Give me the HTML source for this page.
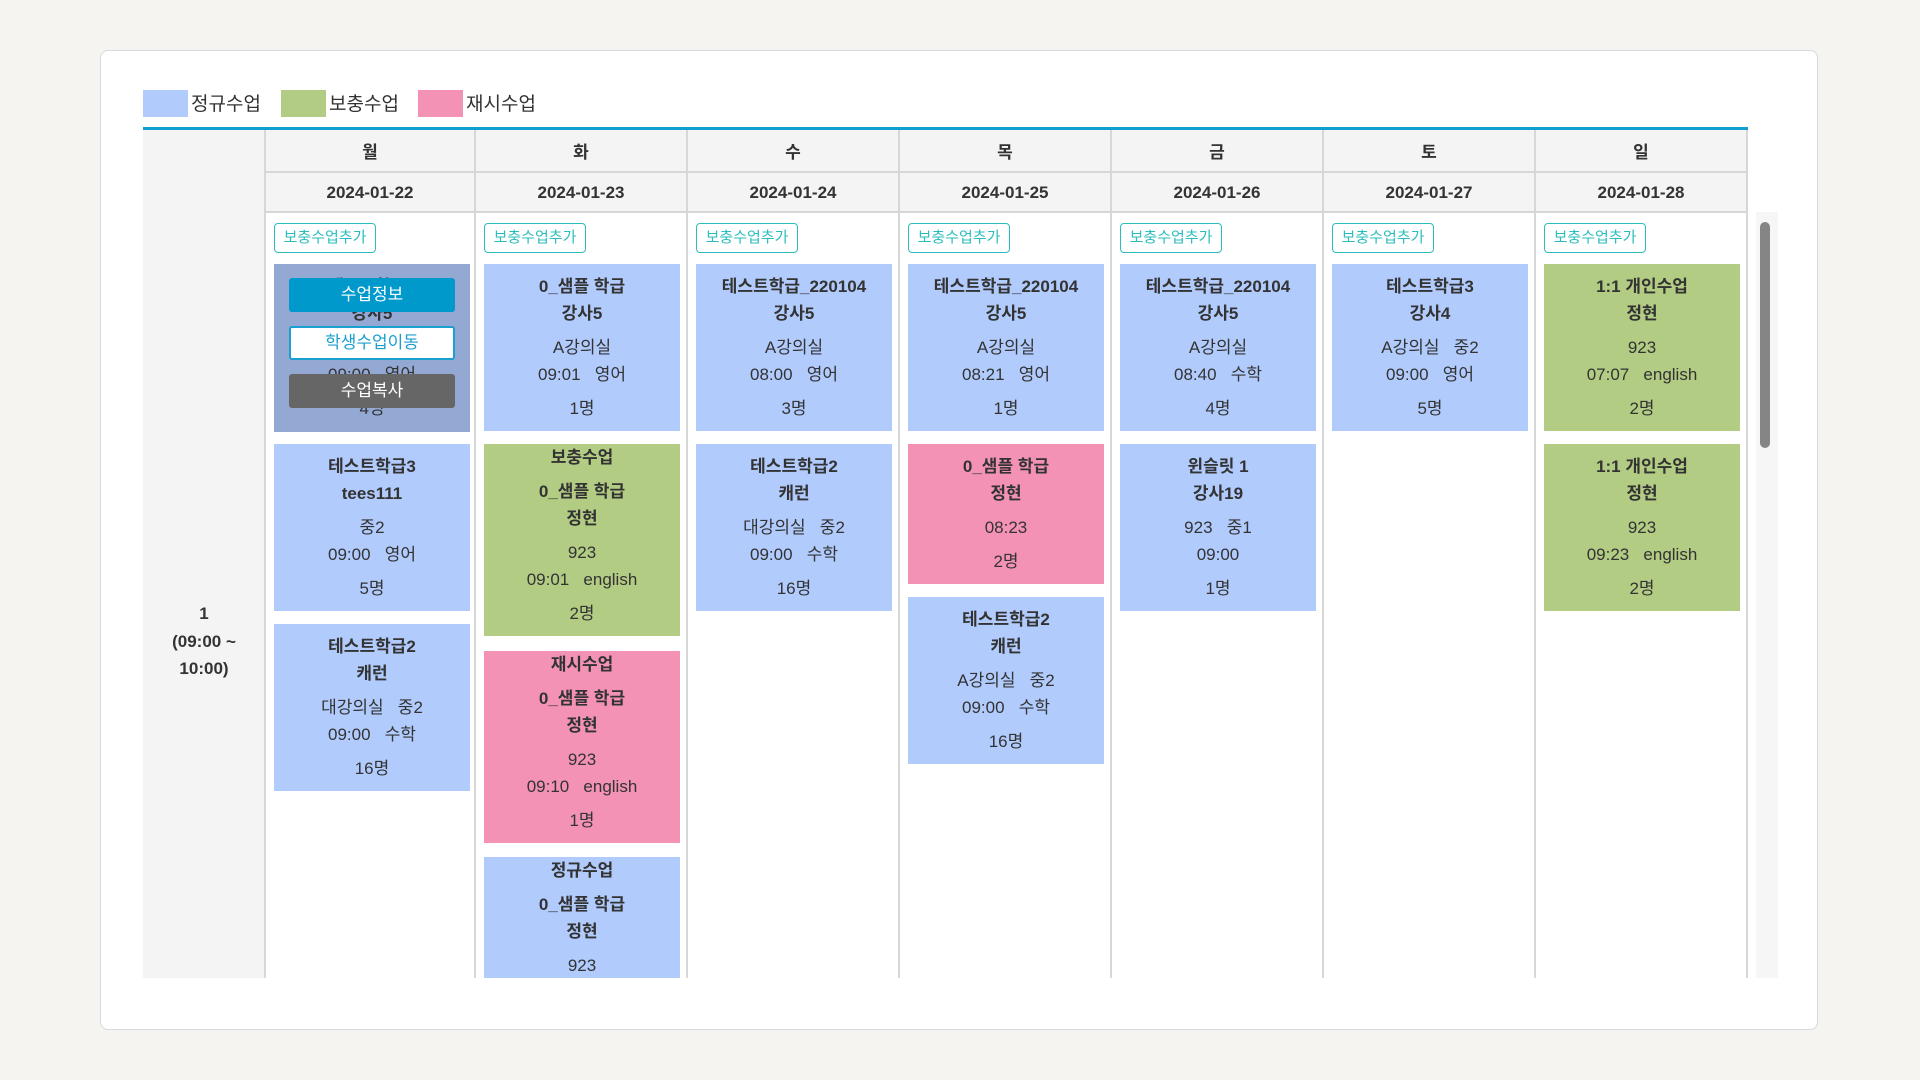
<!DOCTYPE html>
<html><head><meta charset="utf-8"><style>
*{box-sizing:border-box;margin:0;padding:0}
body{width:1920px;height:1080px;background:#f5f4f1;font-family:"Liberation Sans","Noto Sans CJK KR",sans-serif;color:#333;position:relative;overflow:hidden}
.panel{position:absolute;left:100px;top:50px;width:1718px;height:980px;background:#fff;border:1px solid #d5d8de;border-radius:8px}
.sw{position:absolute;top:90px;width:45px;height:27px}
.lg{position:absolute;top:91px;font-size:19px;line-height:27px;color:#333}
.bl{position:absolute;left:143px;top:127px;width:1605px;height:3px;background:#119fcf}
.timecol{position:absolute;left:143px;top:130px;width:122px;height:848px;background:#f4f4f4;border-right:1px solid #d7d7d7}
.hd{position:absolute;background:#f4f4f4;border-right:2px solid #d7d7d7;border-bottom:2px solid #d7d7d7;text-align:center;font-weight:bold;font-size:17px;color:#333}
.col{position:absolute;top:212px;height:766px;border-right:2px solid #d7d7d7}
.add{position:absolute;left:8px;top:11px;width:102px;height:30px;border:1.5px solid #2bbdbd;border-radius:4px;color:#2bbdbd;font-size:15px;line-height:27px;text-align:center;background:#fff}
.c{position:absolute;left:8px;width:196px;text-align:center;font-size:17px;line-height:27px;padding:9px 0}
.c.h{padding-top:0}
.c b{display:block}
.c .g{margin-top:7px}
.blue{background:#b1cbfd}.green{background:#b3cc84}.pink{background:#f492b5}
.time{position:absolute;left:143px;top:600px;width:122px;text-align:center;font-weight:bold;font-size:17px;line-height:27.5px}
.ov{position:absolute;left:8px;width:196px;background:#93a8d3}
.ov b{display:block}
.btn{position:absolute;left:15px;width:166px;height:34px;border-radius:3px;font-size:17px;line-height:34px;text-align:center}
.sb{position:absolute;left:1756px;top:212px;width:22px;height:766px;background:#f6f6f6}
.sb div{position:absolute;left:4px;top:10px;width:10px;height:226px;background:#858585;border-radius:5px}
</style></head><body>
<div class="panel"></div>
<div class="sw" style="left:143px;background:#b1cbfd"></div><div class="lg" style="left:191px">정규수업</div>
<div class="sw" style="left:281px;background:#b3cc84"></div><div class="lg" style="left:329px">보충수업</div>
<div class="sw" style="left:418px;background:#f492b5"></div><div class="lg" style="left:466px">재시수업</div>
<div class="bl"></div>
<div class="timecol"></div>
<div class="time">1<br>(09:00 ~<br>10:00)</div>

<div class="hd" style="left:264px;top:130px;width:212px;height:43px;line-height:46px;border-left:2px solid #d7d7d7">월</div>
<div class="hd" style="left:476px;top:130px;width:212px;height:43px;line-height:46px">화</div>
<div class="hd" style="left:688px;top:130px;width:212px;height:43px;line-height:46px">수</div>
<div class="hd" style="left:900px;top:130px;width:212px;height:43px;line-height:46px">목</div>
<div class="hd" style="left:1112px;top:130px;width:212px;height:43px;line-height:46px">금</div>
<div class="hd" style="left:1324px;top:130px;width:212px;height:43px;line-height:46px">토</div>
<div class="hd" style="left:1536px;top:130px;width:212px;height:43px;line-height:46px">일</div>
<div class="hd" style="left:264px;top:173px;width:212px;height:40px;line-height:40px;border-left:2px solid #d7d7d7">2024-01-22</div>
<div class="hd" style="left:476px;top:173px;width:212px;height:40px;line-height:40px">2024-01-23</div>
<div class="hd" style="left:688px;top:173px;width:212px;height:40px;line-height:40px">2024-01-24</div>
<div class="hd" style="left:900px;top:173px;width:212px;height:40px;line-height:40px">2024-01-25</div>
<div class="hd" style="left:1112px;top:173px;width:212px;height:40px;line-height:40px">2024-01-26</div>
<div class="hd" style="left:1324px;top:173px;width:212px;height:40px;line-height:40px">2024-01-27</div>
<div class="hd" style="left:1536px;top:173px;width:212px;height:40px;line-height:40px">2024-01-28</div>

<!-- Mon -->
<div class="col" style="left:264px;width:212px;border-left:2px solid #d7d7d7">
<div class="add">보충수업추가</div>
<div class="ov" style="top:52px;height:168px;color:#333;text-align:center;font-size:17px;line-height:27px;padding-top:9px"><b>테스트학급3</b><b>강사5</b><div style="margin-top:7px">A강의실</div><div>09:00&nbsp;&nbsp;&nbsp;영어</div><div style="margin-top:7px">4명</div>
<div class="btn" style="top:14px;background:#0099cc;color:#fff">수업정보</div>
<div class="btn" style="top:62px;background:#fff;color:#1a9fcf;border:2px solid #1aa0d0;line-height:30px">학생수업이동</div>
<div class="btn" style="top:110px;background:#666;color:#fff">수업복사</div>
</div>
<div class="c blue" style="top:232px"><b>테스트학급3</b><b>tees111</b><div class="g">중2</div><div>09:00&nbsp;&nbsp;&nbsp;영어</div><div class="g">5명</div></div>
<div class="c blue" style="top:412px"><b>테스트학급2</b><b>캐런</b><div class="g">대강의실&nbsp;&nbsp;&nbsp;중2</div><div>09:00&nbsp;&nbsp;&nbsp;수학</div><div class="g">16명</div></div>
</div>

<!-- Tue -->
<div class="col" style="left:476px;width:212px;overflow:hidden">
<div class="add">보충수업추가</div>
<div class="c blue" style="top:52px"><b>0_샘플 학급</b><b>강사5</b><div class="g">A강의실</div><div>09:01&nbsp;&nbsp;&nbsp;영어</div><div class="g">1명</div></div>
<div class="c green h" style="top:232px"><b>보충수업</b><b class="g">0_샘플 학급</b><b>정현</b><div class="g">923</div><div>09:01&nbsp;&nbsp;&nbsp;english</div><div class="g">2명</div></div>
<div class="c pink h" style="top:439px"><b>재시수업</b><b class="g">0_샘플 학급</b><b>정현</b><div class="g">923</div><div>09:10&nbsp;&nbsp;&nbsp;english</div><div class="g">1명</div></div>
<div class="c blue h" style="top:645px"><b>정규수업</b><b class="g">0_샘플 학급</b><b>정현</b><div class="g">923</div><div>09:10&nbsp;&nbsp;&nbsp;english</div><div class="g">1명</div></div>
</div>

<!-- Wed -->
<div class="col" style="left:688px;width:212px">
<div class="add">보충수업추가</div>
<div class="c blue" style="top:52px"><b>테스트학급_220104</b><b>강사5</b><div class="g">A강의실</div><div>08:00&nbsp;&nbsp;&nbsp;영어</div><div class="g">3명</div></div>
<div class="c blue" style="top:232px"><b>테스트학급2</b><b>캐런</b><div class="g">대강의실&nbsp;&nbsp;&nbsp;중2</div><div>09:00&nbsp;&nbsp;&nbsp;수학</div><div class="g">16명</div></div>
</div>

<!-- Thu -->
<div class="col" style="left:900px;width:212px">
<div class="add">보충수업추가</div>
<div class="c blue" style="top:52px"><b>테스트학급_220104</b><b>강사5</b><div class="g">A강의실</div><div>08:21&nbsp;&nbsp;&nbsp;영어</div><div class="g">1명</div></div>
<div class="c pink" style="top:232px"><b>0_샘플 학급</b><b>정현</b><div class="g">08:23</div><div class="g">2명</div></div>
<div class="c blue" style="top:385px"><b>테스트학급2</b><b>캐런</b><div class="g">A강의실&nbsp;&nbsp;&nbsp;중2</div><div>09:00&nbsp;&nbsp;&nbsp;수학</div><div class="g">16명</div></div>
</div>

<!-- Fri -->
<div class="col" style="left:1112px;width:212px">
<div class="add">보충수업추가</div>
<div class="c blue" style="top:52px"><b>테스트학급_220104</b><b>강사5</b><div class="g">A강의실</div><div>08:40&nbsp;&nbsp;&nbsp;수학</div><div class="g">4명</div></div>
<div class="c blue" style="top:232px"><b>윈슬릿 1</b><b>강사19</b><div class="g">923&nbsp;&nbsp;&nbsp;중1</div><div>09:00</div><div class="g">1명</div></div>
</div>

<!-- Sat -->
<div class="col" style="left:1324px;width:212px">
<div class="add">보충수업추가</div>
<div class="c blue" style="top:52px"><b>테스트학급3</b><b>강사4</b><div class="g">A강의실&nbsp;&nbsp;&nbsp;중2</div><div>09:00&nbsp;&nbsp;&nbsp;영어</div><div class="g">5명</div></div>
</div>

<!-- Sun -->
<div class="col" style="left:1536px;width:212px">
<div class="add">보충수업추가</div>
<div class="c green" style="top:52px"><b>1:1 개인수업</b><b>정현</b><div class="g">923</div><div>07:07&nbsp;&nbsp;&nbsp;english</div><div class="g">2명</div></div>
<div class="c green" style="top:232px"><b>1:1 개인수업</b><b>정현</b><div class="g">923</div><div>09:23&nbsp;&nbsp;&nbsp;english</div><div class="g">2명</div></div>
</div>

<div class="sb"><div></div></div>
</body></html>
